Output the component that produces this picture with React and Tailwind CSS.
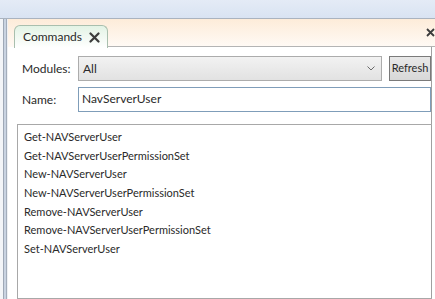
import React from "react";

const items = [
  "Get-NAVServerUser",
  "Get-NAVServerUserPermissionSet",
  "New-NAVServerUser",
  "New-NAVServerUserPermissionSet",
  "Remove-NAVServerUser",
  "Remove-NAVServerUserPermissionSet",
  "Set-NAVServerUser",
];

export default function App() {
  return (
    <div className="w-[435px] h-[299px] overflow-hidden bg-white flex flex-col text-[11px] text-[#2a2a2a] font-['Lato','Noto_Sans',sans-serif]">
      <div className="h-[19px] shrink-0 bg-gradient-to-b from-[#e4ebf6] to-[#d9e3f2] border-b border-[#aab3bf]" />
      <div className="flex flex-1 min-h-0">
        <div className="w-[8px] shrink-0 flex">
          <div className="w-[3px] bg-[#f3f5f8]" />
          <div className="w-[1px] bg-[#9ea8b6]" />
          <div className="w-[2px] bg-[#c9d3e1]" />
          <div className="w-[1px] bg-[#a3adbb]" />
          <div className="w-[1px] bg-[#eef1f5]" />
        </div>
        <div className="flex-1 flex flex-col min-w-0">
          <div className="h-[28px] shrink-0 bg-gradient-to-b from-[#fdecd9] to-[#fffaf5] flex items-end relative">
            <div className="ml-[6px] w-[94px] h-[23px] rounded-t-[6px] border border-b-0 border-[#a9bfae] bg-gradient-to-b from-[#e3f3e5] to-white flex items-center pl-[8px] gap-[7px] relative top-[1px]">
              <span className="leading-none text-[12px]">Commands</span>
              <svg width="11" height="11" viewBox="0 0 11 11" className="mt-[1px]">
                <path d="M1.5 1.5 L9.5 9.5 M9.5 1.5 L1.5 9.5" stroke="#3c3c3c" strokeWidth="2.2" strokeLinecap="round" />
              </svg>
            </div>
            <div className="flex-1 border-b border-[#b4b4b4] h-[1px] self-end" />
            <svg width="9" height="9" viewBox="0 0 9 9" className="absolute right-[0px] top-[9px]">
              <path d="M1 1 L8 8 M8 1 L1 8" stroke="#3c3c3c" strokeWidth="1.8" />
            </svg>
          </div>
          <div className="flex-1 border-r border-[#a0a0a0] mr-[3px] flex flex-col pl-[9px] pt-[9px]">
            <div className="flex items-center h-[25px]">
              <span className="w-[61px] pl-[5px] text-[12px]">Modules:</span>
              <div className="w-[304px] h-[25px] border border-[#acacac] bg-gradient-to-b from-[#f2f2f2] to-[#e2e2e2] flex items-center pl-[4px] pr-[6px]">
                <span className="flex-1 text-[12px]">All</span>
                <svg width="8" height="5" viewBox="0 0 8 5">
                  <path d="M0.5 0.5 L4 4 L7.5 0.5" fill="none" stroke="#6a6a6a" strokeWidth="1" />
                </svg>
              </div>
              <div className="ml-[7px] w-[42px] h-[25px] border border-[#7a7a7a] bg-gradient-to-b from-[#e8e8e8] to-[#d8d8d8] flex items-center justify-center">
                Refresh
              </div>
            </div>
            <div className="flex items-center h-[25px] mt-[6px]">
              <span className="w-[61px] pl-[5px] text-[12px]">Name:</span>
              <div className="flex-1 h-[25px] border border-[#7f9db9] bg-white flex items-center pl-[3px] pb-[2px] text-[12px]">
                NavServerUser
              </div>
            </div>
            <div className="flex-1 mt-[12px] border border-[#a8a8a8] border-r-0 pt-[3px] pl-[6px] -mr-[1px]">
              {items.map((t) => (
                <div key={t} className="h-[18.7px] leading-[18.7px]">{t}</div>
              ))}
            </div>
          </div>
        </div>
      </div>
    </div>
  );
}
